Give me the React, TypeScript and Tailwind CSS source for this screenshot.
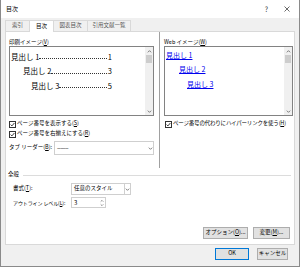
import React from 'react';

const jp = "font-['Noto_Sans_CJK_JP','Noto_Sans',sans-serif]";

const Check: React.FC = () => (
  <svg width="7" height="7" viewBox="0 0 7 7" className="shrink-0">
    <rect x="0.5" y="0.5" width="6" height="6" fill="white" stroke="#333" />
    <path d="M1.6 3.6 L2.9 4.9 L5.4 2" fill="none" stroke="#222" strokeWidth="0.9" />
  </svg>
);

const Chevron: React.FC<{ up?: boolean; size?: number }> = ({ up, size = 5 }) => (
  <svg width={size} height={size} viewBox="0 0 6 6">
    <path d={up ? 'M1 4 L3 2 L5 4' : 'M1 2 L3 4 L5 2'} fill="none" stroke="#555" strokeWidth="0.9" />
  </svg>
);

const ScrollBar: React.FC = () => (
  <div className="w-[8px] bg-[#f0f0f0] flex flex-col items-center">
    <div className="h-[8px] flex items-center justify-center">
      <Chevron up />
    </div>
    <div className="w-[6px] h-[8px] bg-[#cdcdcd]" />
    <div className="flex-1" />
    <div className="h-[8px] flex items-center justify-center">
      <Chevron />
    </div>
  </div>
);

const PrintRow: React.FC<{ indent: string; label: string; page: string }> = ({ indent, label, page }) => (
  <div className={`flex items-end h-[14.5px] pr-[33px] ${indent}`}>
    <span className="text-[7.5px] leading-[10px] whitespace-pre">{label}</span>
    <span className="flex-1 border-b border-dotted border-[#333] mb-[2.5px]" />
    <span className="text-[7.5px] leading-[10px] pl-[1px]">{page}</span>
  </div>
);

const Btn: React.FC<{ w: string; children: React.ReactNode; primary?: boolean }> = ({ w, children, primary }) => (
  <div
    className={`${w} h-[12px] flex items-center justify-center text-[5.5px] leading-none whitespace-nowrap bg-[#e1e1e1] border ${
      primary ? 'border-[#0078d7]' : 'border-[#adadad]'
    }`}
  >
    {children}
  </div>
);

const App: React.FC = () => {
  return (
    <div className={`w-[300px] h-[267px] bg-[#f0f0f0] border-x border-b border-[#8a8a8a] flex flex-col text-black ${jp}`}>
      {/* タイトルバー */}
      <div className="h-[18px] bg-white flex items-center pl-[5px] pr-[9px] shrink-0">
        <span className="text-[6px] leading-none">目次</span>
        <span className="flex-1" />
        <span className="text-[7px] leading-none text-[#333] mr-[16px]">?</span>
        <svg width="6" height="6" viewBox="0 0 6 6">
          <path d="M0.5 0.5 L5.5 5.5 M5.5 0.5 L0.5 5.5" stroke="#444" strokeWidth="0.8" />
        </svg>
      </div>

      {/* タブ */}
      <div className="h-[13px] flex items-end pl-[4px] shrink-0">
        <div className="h-[11px] w-[25px] flex items-center justify-center border border-b-0 border-[#d9d9d9] text-[5.5px] leading-none text-[#555]">
          索引
        </div>
        <div className="h-[12px] w-[25px] -mx-[1px] mb-[-1px] z-10 bg-white flex items-center justify-center border border-b-0 border-[#d9d9d9] text-[5.5px] leading-none">
          目次
        </div>
        <div className="h-[11px] w-[35px] flex items-center justify-center border border-b-0 border-[#d9d9d9] text-[5.5px] leading-none text-[#555]">
          図表目次
        </div>
        <div className="h-[11px] w-[44px] -ml-[1px] flex items-center justify-center border border-b-0 border-[#d9d9d9] text-[5.5px] leading-none text-[#555]">
          引用文献一覧
        </div>
      </div>

      {/* パネル */}
      <div className="mx-[4px] h-[214px] bg-white border border-[#d9d9d9] flex flex-col shrink-0">
        <div className="h-[136px] flex">
          {/* 印刷イメージ */}
          <div className="ml-[3px] w-[145px] flex flex-col pt-[7px]">
            <div className="h-[7px] text-[5.5px] leading-[7px]">印刷イメージ(<span className="underline">V</span>)</div>
            <div className="h-[70px] border border-[#828282] flex">
              <div className="flex-1 flex flex-col">
                <PrintRow indent="pl-[1px]" label="見出し 1" page="1" />
                <PrintRow indent="pl-[13px]" label="見出し 2" page="3" />
                <PrintRow indent="pl-[21px]" label="見出し 3" page="5" />
              </div>
              <ScrollBar />
            </div>
            <div className="mt-[4px] h-[8px] flex items-center gap-[1px] text-[5.5px] leading-none">
              <Check />
              <span>ページ番号を表示する(<span className="underline">S</span>)</span>
            </div>
            <div className="mt-[2px] h-[8px] flex items-center gap-[1px] text-[5.5px] leading-none">
              <Check />
              <span>ページ番号を右揃えにする(<span className="underline">R</span>)</span>
            </div>
            <div className="mt-[3px] h-[14px] flex items-center text-[5.5px] leading-none">
              <span className="w-[45px] whitespace-nowrap">タブ リーダー(<span className="underline">B</span>):</span>
              <div className="flex-1 h-[14px] border border-[#cfcfcf] flex items-center pl-[2px]">
                <span className="flex-1 text-[6px] tracking-[-0.5px]">-------</span>
                <div className="w-[6px] flex items-center justify-center">
                  <Chevron />
                </div>
              </div>
            </div>
          </div>

          {/* 区切り線 */}
          <div className="ml-[5px] w-px bg-[#a0a0a0]" />

          {/* Web イメージ */}
          <div className="ml-[4px] w-[129px] flex flex-col pt-[7px]">
            <div className="h-[7px] text-[5.5px] leading-[7px]">Web イメージ(<span className="underline">W</span>)</div>
            <div className="h-[70px] border border-[#828282] flex">
              <div className="flex-1 flex flex-col text-[7px] leading-[14.5px] text-[#0000ee] pt-[0.5px]">
                <span className="pl-[1px]"><span className="underline">見出し 1</span></span>
                <span className="pl-[14px]"><span className="underline">見出し 2</span></span>
                <span className="pl-[22px]"><span className="underline">見出し 3</span></span>
              </div>
              <ScrollBar />
            </div>
            <div className="mt-[4px] h-[8px] flex items-center gap-[1px] text-[5.5px] leading-none pl-[1px]">
              <Check />
              <span className="whitespace-nowrap tracking-[-0.2px]">ページ番号の代わりにハイパーリンクを使う(<span className="underline">H</span>)</span>
            </div>
          </div>
        </div>

        {/* 全般 */}
        <div className="mt-[4px] ml-[2px] mr-[3px] h-[6px] flex items-center text-[5.5px] leading-none">
          <span>全般</span>
          <div className="flex-1 ml-[4px] h-px bg-[#dcdcdc]" />
        </div>
        <div className="mt-[5px] pl-[7px] h-[12px] flex items-center text-[5.5px] leading-none">
          <span className="w-[58px] whitespace-nowrap">書式(<span className="underline">T</span>):</span>
          <div className="w-[60px] h-[12px] border border-[#cfcfcf] flex items-center">
            <span className="flex-1 pl-[2px] whitespace-nowrap">任意のスタイル</span>
            <div className="w-[6px] h-full border-l border-[#cfcfcf] flex items-center justify-center">
              <Chevron />
            </div>
          </div>
        </div>
        <div className="mt-[2px] pl-[7px] h-[11px] flex items-center text-[5.5px] leading-none">
          <span className="w-[58px] whitespace-nowrap text-[5px] tracking-[-0.1px]">アウトライン レベル(<span className="underline">L</span>):</span>
          <div className="w-[35px] h-[11px] border border-[#cfcfcf] flex items-center">
            <span className="flex-1 pl-[2px] text-[6px]">3</span>
            <div className="w-[6px] h-full flex flex-col items-center justify-center">
              <Chevron up size={4} />
              <Chevron size={4} />
            </div>
          </div>
        </div>

        <div className="flex-1" />
        <div className="pr-[4px] pb-[5px] flex justify-end gap-[5px]">
          <Btn w="w-[45px]">オプション(<span className="underline">O</span>)...</Btn>
          <Btn w="w-[37px]">変更(<span className="underline">M</span>)...</Btn>
        </div>
      </div>

      {/* OK / キャンセル */}
      <div className="mt-[3px] pr-[11px] flex justify-end gap-[8px]">
        <Btn w="w-[34px]" primary>OK</Btn>
        <Btn w="w-[31px]">キャンセル</Btn>
      </div>
    </div>
  );
};

export default App;
